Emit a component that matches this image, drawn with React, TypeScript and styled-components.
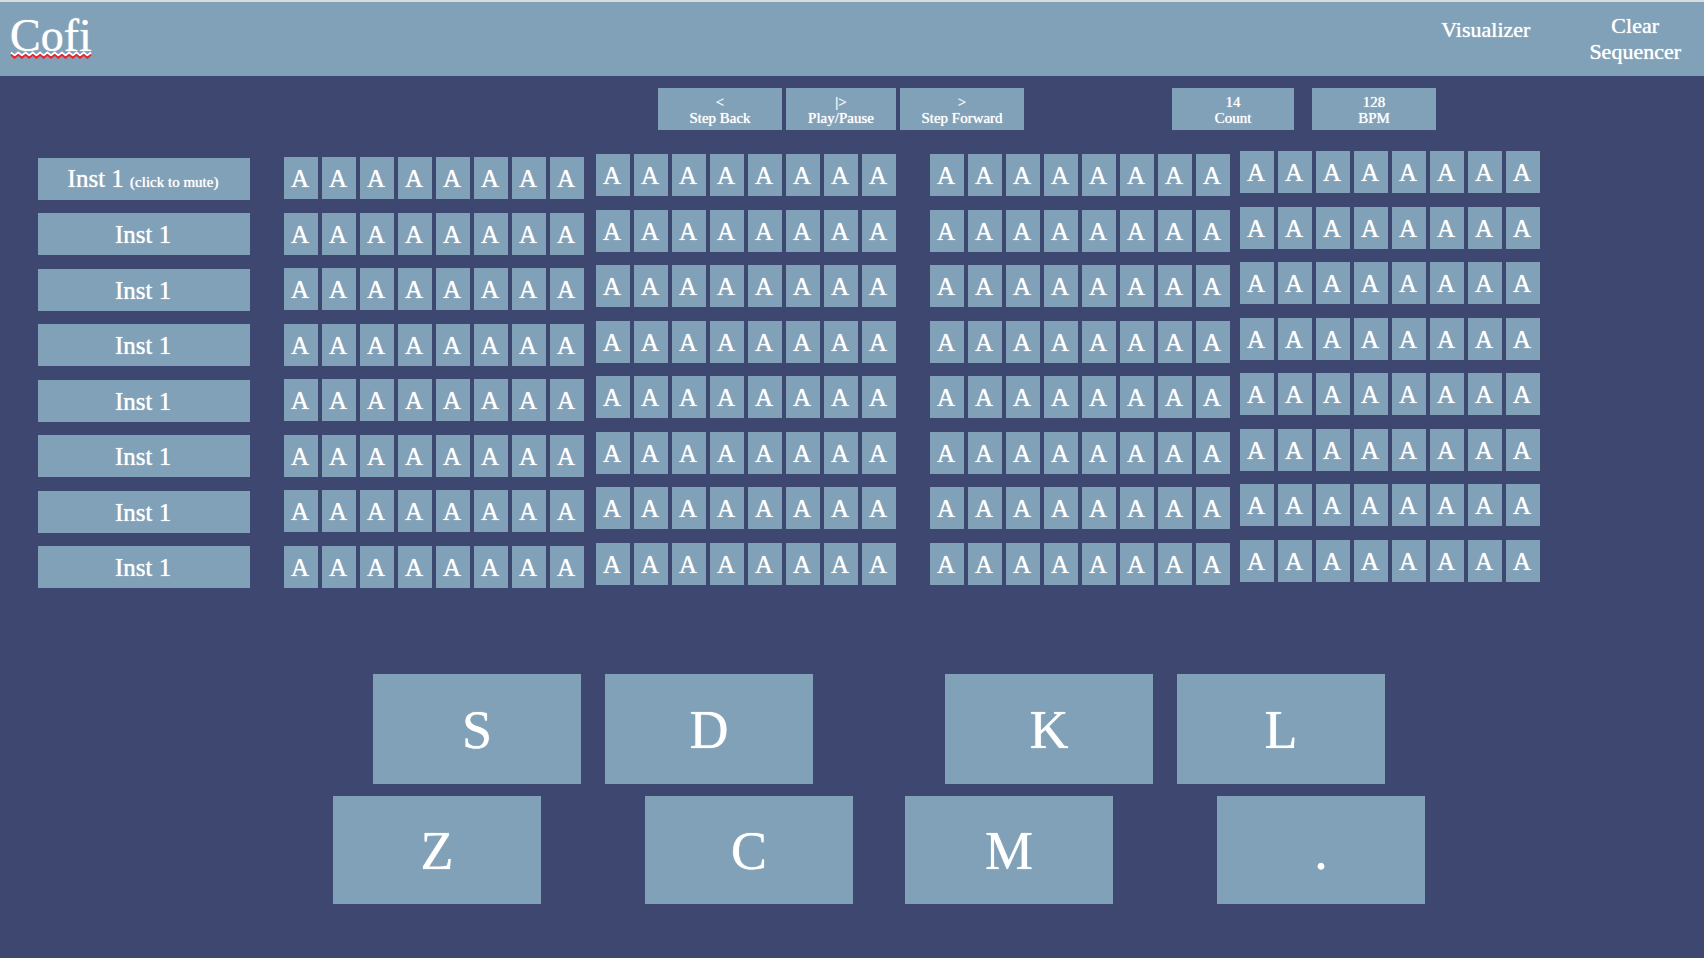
import React, { useState } from 'react';
import styled, { createGlobalStyle } from 'styled-components';

const GlobalStyle = createGlobalStyle`
  * { box-sizing: border-box; }
  body {
    margin: 0;
    background: #3e4770;
    color: #fff;
    font-family: "Liberation Serif", "Times New Roman", serif;
    text-shadow: 0 0 1px #fff;
  }
  button {
    margin: 0;
    padding: 0;
    border: 0;
    background: none;
    color: inherit;
    font: inherit;
    text-shadow: inherit;
    cursor: pointer;
  }
`;

const Page = styled.div`
  min-height: 100vh;
  border-top: 2px solid #d9dcdd;
`;

const Header = styled.header`
  display: flex;
  align-items: flex-start;
  height: 74px;
  padding: 0 23px 0 10px;
  background: #80a1b7;
`;

const Brand = styled.h1`
  position: relative;
  margin: 8px auto 0 0;
  font-size: 46px;
  font-weight: 400;
  line-height: 52px;
`;

const Squiggle = styled.svg`
  position: absolute;
  left: 0;
  bottom: 2px;
  width: 82px;
  height: 9px;
`;

const Nav = styled.nav`
  display: flex;
  align-items: flex-start;
  gap: 59px;
`;

const NavButton = styled.button<{ $top: number }>`
  margin-top: ${(p) => p.$top}px;
  font-size: 22px;
  line-height: 26px;
  text-align: center;
`;

const Controls = styled.div`
  display: grid;
  grid-template-columns: 658fr auto 148fr auto 268fr;
  padding-top: 12px;
`;

const Transport = styled.div`
  grid-column: 2;
  display: flex;
  gap: 4px;
`;

const Readouts = styled.div`
  grid-column: 4;
  display: flex;
  gap: 18px;
`;

const TransportButton = styled.button<{ $width?: number }>`
  width: ${(p) => p.$width ?? 124}px;
  height: 42px;
  padding-top: 2px;
  background: #80a1b7;
  font-size: 15px;
  line-height: 16px;
`;

const Readout = styled.div<{ $width?: number }>`
  width: ${(p) => p.$width ?? 124}px;
  height: 42px;
  padding-top: 6px;
  background: #80a1b7;
  font-size: 15px;
  line-height: 16px;
  text-align: center;
`;

const Line = styled.span`
  display: block;
`;

const Sequencer = styled.main`
  display: flex;
  align-items: flex-start;
  gap: 34px;
  padding: 21px 164px 0 38px;
`;

const Instruments = styled.div`
  flex: 212 1 0;
  display: grid;
  align-content: space-between;
  height: 430px;
  margin-top: 7px;
`;

const InstrumentButton = styled.button`
  height: 42px;
  padding: 2px 2px 0 0;
  background: #80a1b7;
  font-size: 25px;
  line-height: 30px;
  white-space: nowrap;

  small { font-size: 15px; }
`;

const Half = styled.div<{ $grow: number; $gap: number }>`
  flex: ${(p) => p.$grow} 1 0;
  display: flex;
  align-items: flex-start;
  gap: ${(p) => p.$gap}px;
`;

const Bank = styled.div<{ $drop: number }>`
  flex: 1 1 0;
  display: grid;
  grid-template-columns: repeat(8, minmax(0, 1fr));
  column-gap: 4px;
  align-content: space-between;
  height: 431px;
  margin-top: ${(p) => p.$drop}px;
`;

const Step = styled.button`
  height: 42px;
  padding: 2px 2px 0 0;
  background: #80a1b7;
  font-size: 25px;
  line-height: 30px;
`;

const Pads = styled.section`
  display: grid;
  row-gap: 12px;
  padding: 86px 0 52px 54px;
`;

const PadRow = styled.div<{ $split: number }>`
  display: flex;
  justify-content: center;
  gap: ${(p) => p.$split}px;
`;

const Hand = styled.div<{ $gap: number }>`
  display: flex;
  gap: ${(p) => p.$gap}px;
`;

const Pad = styled.button<{ $height: number }>`
  width: 208px;
  height: ${(p) => p.$height}px;
  padding-top: 2px;
  background: #80a1b7;
  font-size: 54px;
  line-height: 60px;
`;

const ROWS = 8;
const STEPS_PER_BANK = 8;

const halves = [
  { grow: 612, gap: 12, drops: [6, 3] },
  { grow: 610, gap: 10, drops: [3, 0] },
];

const padRows = [
  { height: 110, split: 132, gap: 24, hands: [['S', 'D'], ['K', 'L']] },
  { height: 108, split: 52, gap: 104, hands: [['Z', 'C'], ['M', '.']] },
];

const TEETH = 11;

function wave(y: number) {
  const half = 80 / (TEETH * 2);
  let d = `M1 ${y}`;
  for (let i = 1; i <= TEETH * 2; i += 1) {
    d += ` L${(1 + i * half).toFixed(2)} ${i % 2 ? y + 3 : y}`;
  }
  return d;
}

function StepBank({ bank, drop }: { bank: number; drop: number }) {
  const [active, setActive] = useState<Record<number, boolean>>({});
  return (
    <Bank $drop={drop}>
      {Array.from({ length: ROWS * STEPS_PER_BANK }, (_, i) => (
        <Step
          key={i}
          type="button"
          aria-pressed={!!active[i]}
          aria-label={`A, track ${Math.floor(i / STEPS_PER_BANK) + 1}, step ${bank * STEPS_PER_BANK + (i % STEPS_PER_BANK) + 1}`}
          onClick={() => setActive((a) => ({ ...a, [i]: !a[i] }))}
        >
          A
        </Step>
      ))}
    </Bank>
  );
}

export default function App() {
  return (
    <Page>
      <GlobalStyle />
      <Header>
        <Brand>
          Cofi
          <Squiggle viewBox="0 0 82 9" aria-hidden="true" fill="none">
            <path d={wave(1.5)} stroke="#fff" strokeWidth="2" />
            <path d={wave(3.8)} stroke="#f0202c" strokeWidth="1.8" />
          </Squiggle>
        </Brand>
        <Nav>
          <NavButton type="button" $top={15}>Visualizer</NavButton>
          <NavButton type="button" $top={11}>
            Clear
            <br />
            Sequencer
          </NavButton>
        </Nav>
      </Header>

      <Controls>
        <Transport>
          <TransportButton type="button">
            <Line>&lt;</Line>
            <Line>Step Back</Line>
          </TransportButton>
          <TransportButton type="button" $width={110}>
            <Line>|&gt;</Line>
            <Line>Play/Pause</Line>
          </TransportButton>
          <TransportButton type="button">
            <Line>&gt;</Line>
            <Line>Step Forward</Line>
          </TransportButton>
        </Transport>
        <Readouts>
          <Readout $width={122}>
            <Line>14</Line>
            <Line>Count</Line>
          </Readout>
          <Readout>
            <Line>128</Line>
            <Line>BPM</Line>
          </Readout>
        </Readouts>
      </Controls>

      <Sequencer>
        <Instruments>
          {Array.from({ length: ROWS }, (_, i) => (
            <InstrumentButton key={i} type="button">
              Inst 1{i === 0 && <> <small>(click to mute)</small></>}
            </InstrumentButton>
          ))}
        </Instruments>
        {halves.map((half, h) => (
          <Half key={h} $grow={half.grow} $gap={half.gap}>
            {half.drops.map((drop, b) => (
              <StepBank key={b} bank={h * 2 + b} drop={drop} />
            ))}
          </Half>
        ))}
      </Sequencer>

      <Pads>
        {padRows.map((row) => (
          <PadRow key={row.height} $split={row.split}>
            {row.hands.map((hand) => (
              <Hand key={hand[0]} $gap={row.gap}>
                {hand.map((key) => (
                  <Pad key={key} type="button" $height={row.height}>
                    {key}
                  </Pad>
                ))}
              </Hand>
            ))}
          </PadRow>
        ))}
      </Pads>
    </Page>
  );
}
